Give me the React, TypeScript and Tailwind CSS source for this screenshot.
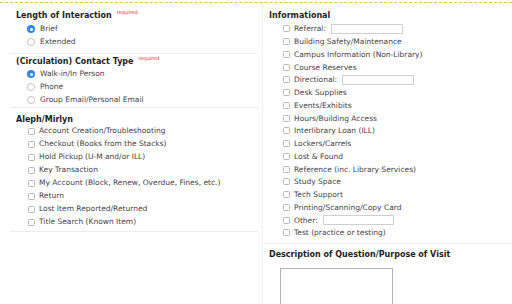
const font = { fontFamily: '"DejaVu Sans", Verdana, sans-serif' };

function Radio({ checked, label }: { checked?: boolean; label: string }) {
  return (
    <div className="flex h-[13px] items-center pl-[11px]">
      {checked ? (
        <span className="flex h-[8px] w-[8px] items-center justify-center rounded-full bg-[#2f86ee]">
          <span className="h-[3px] w-[3px] rounded-full bg-white" />
        </span>
      ) : (
        <span className="h-[8px] w-[8px] rounded-full border border-[#c4c4c4] bg-white" />
      )}
      <span className="ml-[5px] text-[7.5px] text-[#444]">{label}</span>
    </div>
  );
}

function Check({ label, input, rowH = 'h-[13px]' }: { label: string; input?: string; rowH?: string }) {
  return (
    <div className={`flex ${rowH} items-center`}>
      <span className="h-[7px] w-[7px] rounded-[1.5px] border border-[#b8b8b8] bg-white" />
      <span className="ml-[4px] text-[7.5px] text-[#444]">{label}</span>
      {input && <span className={`ml-[5px] h-[10px] border border-[#d0d0d0] bg-white ${input}`} />}
    </div>
  );
}

function Heading({ text, required, h }: { text: string; required?: boolean; h: string }) {
  return (
    <div className={`flex ${h} items-center`}>
      <span className="text-[8px] font-bold text-[#1e1e1e]">{text}</span>
      {required && <span className="ml-[5px] -mt-[6px] text-[5px] text-[#e31c1c]">required</span>}
    </div>
  );
}

const aleph = [
  'Account Creation/Troubleshooting',
  'Checkout (Books from the Stacks)',
  'Hold Pickup (U-M and/or ILL)',
  'Key Transaction',
  'My Account (Block, Renew, Overdue, Fines, etc.)',
  'Return',
  'Lost Item Reported/Returned',
  'Title Search (Known Item)',
];

const info: { label: string; input?: string }[] = [
  { label: 'Referral:', input: 'w-[72px]' },
  { label: 'Building Safety/Maintenance' },
  { label: 'Campus Information (Non-Library)' },
  { label: 'Course Reserves' },
  { label: 'Directional:', input: 'w-[72px]' },
  { label: 'Desk Supplies' },
  { label: 'Events/Exhibits' },
  { label: 'Hours/Building Access' },
  { label: 'Interlibrary Loan (ILL)' },
  { label: 'Lockers/Carrels' },
  { label: 'Lost & Found' },
  { label: 'Reference (inc. Library Services)' },
  { label: 'Study Space' },
  { label: 'Tech Support' },
  { label: 'Printing/Scanning/Copy Card' },
  { label: 'Other:', input: 'w-[71px]' },
  { label: 'Test (practice or testing)' },
];

export default function App() {
  return (
    <div className="h-[304px] w-[512px] overflow-hidden bg-white pt-[2px]" style={font}>
      <div className="grid grid-cols-[262px_1fr] border-t border-dashed border-[#f0c23c]">
        {/* left column */}
        <div className="pl-[10px] pr-[4px]">
          <div className="border-b border-[#ececec] px-[6px] pt-[6.5px] pb-[4.5px]">
            <Heading text="Length of Interaction" required h="h-[13px]" />
            <Radio checked label="Brief" />
            <Radio label="Extended" />
          </div>
          <div className="border-b border-[#ececec] px-[6px] pt-[1.5px] pb-[0.5px]">
            <Heading text="(Circulation) Contact Type" required h="h-[12px]" />
            <Radio checked label="Walk-in/In Person" />
            <Radio label="Phone" />
            <Radio label="Group Email/Personal Email" />
          </div>
          <div className="border-b border-[#ececec] px-[6px] pt-[6.5px] pb-[2.5px]">
            <Heading text="Aleph/Mirlyn" h="h-[10px]" />
            <div className="pl-[12px]">
              {aleph.map((a) => (
                <Check key={a} label={a} />
              ))}
            </div>
          </div>
        </div>

        {/* right column */}
        <div className="border-l border-[#f0f0f0]">
          <div className="border-b border-[#ececec] pl-[6px] pt-[6.5px] pb-[3.5px]">
            <Heading text="Informational" h="h-[13px]" />
            <div className="pl-[14px]">
              {info.map((i) => (
                <Check key={i.label} label={i.label} input={i.input} rowH="h-[12.75px]" />
              ))}
            </div>
          </div>
          <div className="pl-[6px] pt-[5px]">
            <Heading text="Description of Question/Purpose of Visit" h="h-[12px]" />
            <div className="ml-[11px] mt-[7px] h-[60px] w-[113px] border border-[#b5b5b5] bg-white" />
          </div>
        </div>
      </div>
    </div>
  );
}
